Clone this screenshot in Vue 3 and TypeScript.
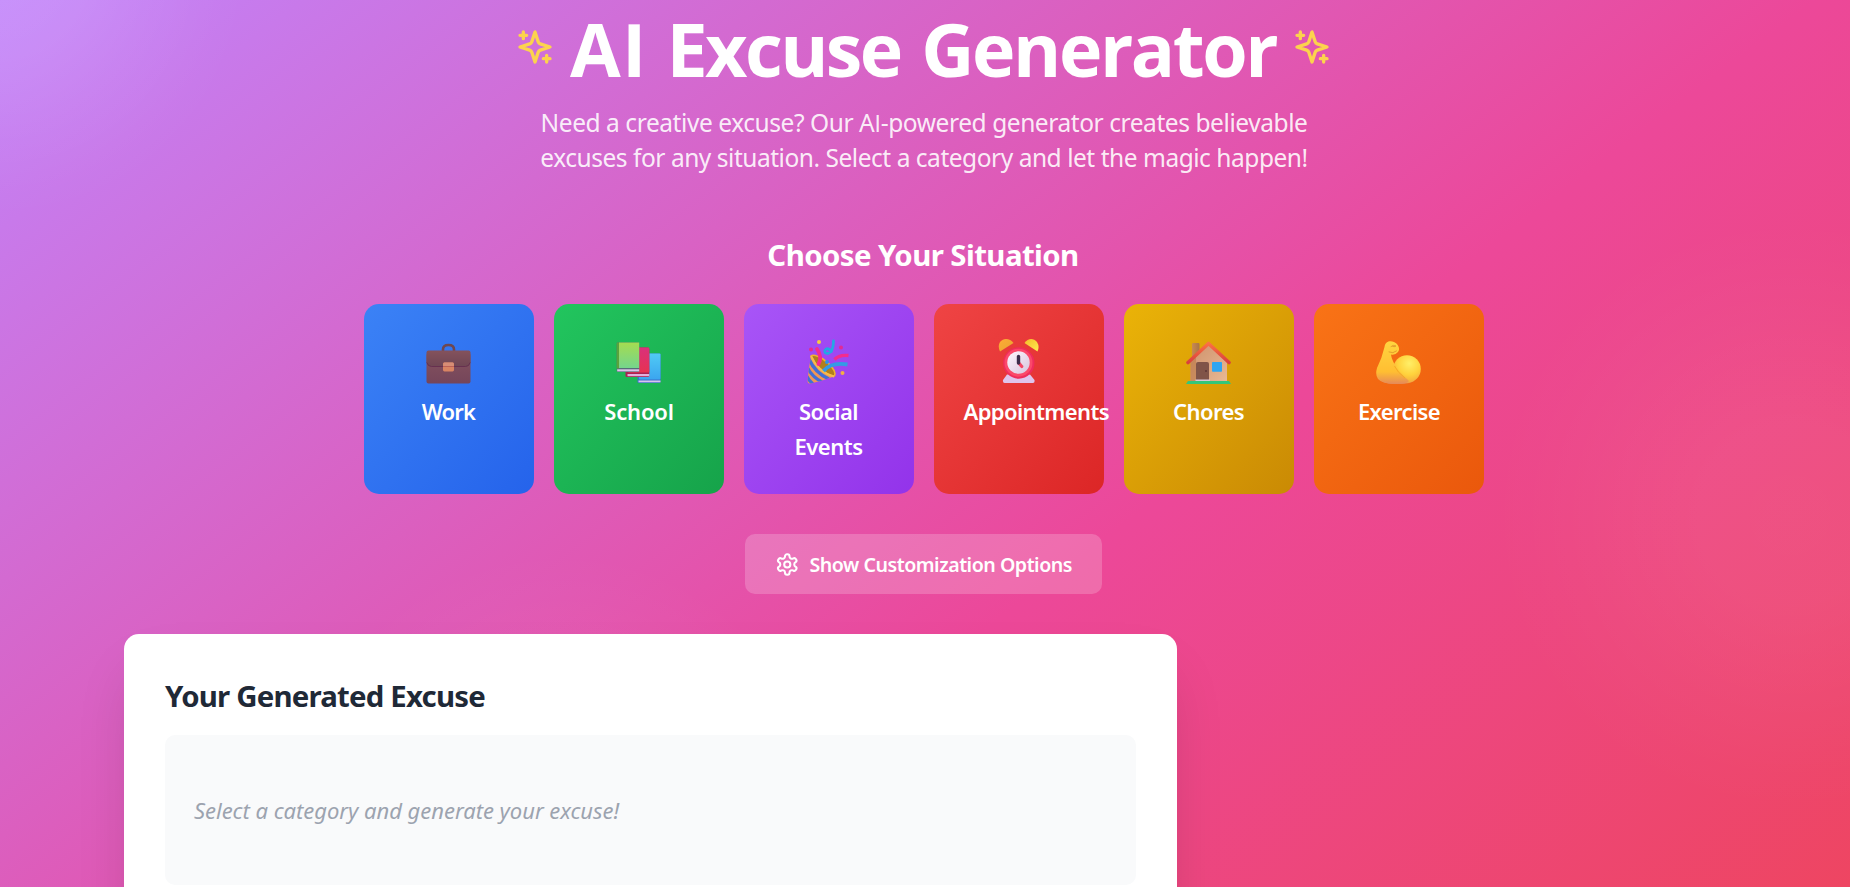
<script setup lang="ts">
interface Category {
  id: string
  label: string
}

const categories: Category[] = [
  { id: 'work', label: 'Work' },
  { id: 'school', label: 'School' },
  { id: 'social', label: 'Social Events' },
  { id: 'appointments', label: 'Appointments' },
  { id: 'chores', label: 'Chores' },
  { id: 'exercise', label: 'Exercise' },
]
</script>

<template>
  <div class="page">
    <header class="hero">
      <div class="title-row">
        <svg v-for="side in ['left', 'right']" :key="side" :class="['sparkles', side]" viewBox="0 0 24 24">
          <path d="m12 3-1.912 5.813a2 2 0 0 1-1.275 1.275L3 12l5.813 1.912a2 2 0 0 1 1.275 1.275L12 21l1.912-5.813a2 2 0 0 1 1.275-1.275L21 12l-5.813-1.912a2 2 0 0 1-1.275-1.275L12 3Z" />
          <path d="M5 3v4M19 17v4M3 5h4M17 19h4" />
        </svg>
        <h1><span class="w1">AI </span><span class="w2">Excuse </span><span class="w3">Generator</span></h1>
      </div>
      <p class="subtitle">
        <span class="line-a">Need a creative excuse? Our A<span class="plain">I</span>-powered generator creates believable</span><br />
        <span class="line-b">excuses for any situation. Select a category and let the magic happen!</span>
      </p>
    </header>

    <section class="situations">
      <h2>Choose Your Situation</h2>
      <div class="grid">
        <button v-for="c in categories" :key="c.id" :class="['card', c.id]">
          <svg v-if="c.id === 'work'" class="emoji" viewBox="0 0 45 45">
            <defs>
              <linearGradient id="wk1" x1="0" y1="0" x2="0" y2="1"><stop offset="0" stop-color="#84525c" /><stop offset="1" stop-color="#6f4654" /></linearGradient>
              <linearGradient id="wk2" x1="0" y1="0" x2="0" y2="1"><stop offset="0" stop-color="#85535f" /><stop offset="1" stop-color="#75455a" /></linearGradient>
            </defs>
            <path d="M17 13V10.500C17 7.500 19.500 6 22.500 6S28 7.500 28 10.500V13" fill="none" stroke="#6e4750" stroke-width="2.600" />
            <rect x="0.500" y="14" width="44" height="30.500" rx="2" fill="url(#wk2)" />
            <path d="M2.500 11.500H42.500Q44.500 11.500 44.500 13.500V23Q43.500 27.500 39.500 27.500H5.500Q1.500 27.500 0.500 23V13.500Q0.500 11.500 2.500 11.500Z" fill="url(#wk1)" />
            <path d="M0.800 23.500Q2 27.500 5.500 27.500H39.500Q43 27.500 44.200 23.500" fill="none" stroke="#67304f" stroke-width="1" />
            <rect x="17" y="23.500" width="11" height="9" rx="1.400" fill="#d98463" />
            <path d="M17.300 25Q17.300 23.500 18.500 23.500H26.500Q27.700 23.500 27.700 25V27H17.300Z" fill="#d78d76" />
            <path d="M17 27.500H28" stroke="#b95f55" stroke-width="0.900" />
          </svg>

          <svg v-else-if="c.id === 'school'" class="emoji" viewBox="0 0 45 45">
            <defs>
              <linearGradient id="sc1" x1="0" y1="0" x2="0" y2="1"><stop offset="0" stop-color="#a5dc50" /><stop offset="1" stop-color="#75d58c" /></linearGradient>
              <linearGradient id="sc2" x1="0" y1="0" x2="0" y2="1"><stop offset="0" stop-color="#d9317b" /><stop offset="1" stop-color="#e73252" /></linearGradient>
              <linearGradient id="sc3" x1="0" y1="0" x2="0" y2="1"><stop offset="0" stop-color="#50cbf5" /><stop offset="1" stop-color="#3ba5ef" /></linearGradient>
            </defs>
            <rect x="21.500" y="14.500" width="23" height="29.500" rx="1.200" fill="#3d6fc8" />
            <rect x="23" y="14.500" width="21.500" height="26" rx="1" fill="url(#sc3)" />
            <path d="M22.500 41.500H44.500V43.300H22.500Z" fill="#d9c4ee" />
            <rect x="9.500" y="8.500" width="23.800" height="29.500" rx="1.500" fill="#aa2353" />
            <rect x="12" y="8.500" width="21.300" height="25" rx="1" fill="url(#sc2)" />
            <path d="M11.500 35H33.300V37.200H11.500Z" fill="#dfb0dc" />
            <rect x="0.700" y="3.500" width="22.500" height="29.500" rx="1.200" fill="#566d78" />
            <rect x="0.700" y="3.500" width="3" height="26" rx="1" fill="#5aa33c" />
            <rect x="3" y="3.500" width="20.200" height="25.500" fill="url(#sc1)" />
            <path d="M1.200 30.300H23.200V32.400H1.200Z" fill="#dbc3e9" />
          </svg>

          <svg v-else-if="c.id === 'social'" class="emoji" viewBox="0 0 45 45">
            <defs>
              <clipPath id="soc"><path d="M5 17Q2.500 30 1.500 42Q1.500 45 4.500 44.500Q16 42 28 37.500Q15 34 5 17Z" /></clipPath>
            </defs>
            <path d="M5 17Q8 14.500 17 20Q28 28 29 34.500Q29 37 27.500 37.500Q12 33 5 17Z" fill="#b07f1c" stroke="#f0b32d" stroke-width="1.600" />
            <g clip-path="url(#soc)">
              <rect width="45" height="45" fill="#f09655" />
              <path d="M3 20Q9 34 23 40M1 28Q6 38 16 43M0 36Q3 42 8 46" fill="none" stroke="#426fd5" stroke-width="3.200" />
            </g>
            <path d="M5 17Q12 33 28 37.500" fill="none" stroke="#f3bd4c" stroke-width="2" />
            <path d="M11 10Q16.500 18 12.500 25" fill="none" stroke="#f32c8e" stroke-width="3.800" stroke-linecap="round" />
            <path d="M17.500 32Q25 23 41.500 25.500" fill="none" stroke="#339be5" stroke-width="3.800" />
            <path d="M28.500 20.500Q33 15.500 42.500 16.500" fill="none" stroke="#f32c8e" stroke-width="3.400" />
            <path d="M27.500 2Q27.500 13 22 14.500Q18 14.500 18.800 11.500Q21.500 7.500 25.500 12.500" fill="none" stroke="#24a6e5" stroke-width="2.800" stroke-linecap="round" />
            <circle cx="13" cy="3" r="2" fill="#f6cb3e" /><circle cx="5" cy="10.500" r="2" fill="#e42b91" />
            <circle cx="35" cy="8.500" r="2" fill="#e12a95" /><circle cx="21" cy="23" r="2" fill="#2d91e9" />
            <circle cx="36.500" cy="34" r="2" fill="#f4af43" />
          </svg>

          <svg v-else-if="c.id === 'appointments'" class="emoji" viewBox="0 0 45 45">
            <defs>
              <linearGradient id="ap1" x1="0" y1="0" x2="1" y2="1"><stop offset="0" stop-color="#ffa936" /><stop offset="1" stop-color="#e7a52f" /></linearGradient>
              <linearGradient id="ap2" x1="0" y1="0" x2="1" y2="1"><stop offset="0" stop-color="#f4bb29" /><stop offset="1" stop-color="#ffed50" /></linearGradient>
              <linearGradient id="ap3" x1="0" y1="0" x2="1" y2="1"><stop offset="0" stop-color="#fff8ff" /><stop offset="1" stop-color="#d7c2db" /></linearGradient>
            </defs>
            <path d="M4 12.500C0.500 5 5 -0.500 11 0Q15 0.500 17.500 4Z" fill="url(#ap1)" />
            <path d="M28.500 4C32 -1 37.500 -1 41 3Q43.800 7.500 41.500 12.500Z" fill="url(#ap2)" />
            <path d="M11 35.500H34L38.500 41Q39 44 37 44H8.500Q6.500 44 7 41Z" fill="#dfc4ec" />
            <circle cx="22.800" cy="24" r="15.700" fill="#ef2c5c" />
            <circle cx="22.500" cy="23.700" r="14" fill="#fb4869" />
            <circle cx="22.500" cy="23.500" r="11.200" fill="url(#ap3)" />
            <path d="M22.800 24L25.800 27.500" stroke="#f44664" stroke-width="3.200" stroke-linecap="round" />
            <path d="M22.500 17.500V24" stroke="#3d2d4b" stroke-width="3.400" stroke-linecap="round" />
          </svg>

          <svg v-else-if="c.id === 'chores'" class="emoji" viewBox="0 0 45 45">
            <defs>
              <linearGradient id="ch1" x1="0" y1="0" x2="1" y2="1"><stop offset="0" stop-color="#ce916a" /><stop offset="1" stop-color="#e8b894" /></linearGradient>
              <linearGradient id="ch2" x1="0" y1="0" x2="1" y2="0"><stop offset="0" stop-color="#c98a51" /><stop offset="1" stop-color="#a97445" /></linearGradient>
              <linearGradient id="ch3" x1="0" y1="0" x2="0" y2="1"><stop offset="0" stop-color="#fb7043" /><stop offset="1" stop-color="#d9403c" /></linearGradient>
            </defs>
            <rect x="6" y="4" width="7.500" height="18" rx="1" fill="url(#ch2)" />
            <path d="M4.500 21L22.500 5L41 21V42.500H4.500Z" fill="url(#ch1)" />
            <path d="M4.500 21L10 16V42.500H4.500Z" fill="#bd7a48" opacity="0.600" />
            <path d="M2 23.500L22.500 4.500L43 23.500" fill="none" stroke="url(#ch3)" stroke-width="3.600" stroke-linecap="round" stroke-linejoin="round" />
            <path d="M10 42V25Q10 23 12 23H21Q23 23 23 25V42Z" fill="#805448" />
            <rect x="9.500" y="40.500" width="14.500" height="2" fill="#d8c7d6" />
            <circle cx="20" cy="32" r="0.900" fill="#5a3434" />
            <rect x="26" y="23" width="10" height="9.800" rx="0.800" fill="#2da5f2" />
            <path d="M2 42H43L45 45H0Z" fill="#34c679" />
          </svg>

          <svg v-else class="emoji" viewBox="0 0 45 45">
            <defs>
              <radialGradient id="ex1" cx="0.580" cy="0.300" r="0.750"><stop offset="0" stop-color="#ffef68" /><stop offset="0.550" stop-color="#ffd23c" /><stop offset="1" stop-color="#f2a23e" /></radialGradient>
              <linearGradient id="ex2" gradientUnits="userSpaceOnUse" x1="0" y1="2" x2="0" y2="46"><stop offset="0" stop-color="#ffd540" /><stop offset="0.700" stop-color="#ffbe32" /><stop offset="1" stop-color="#e4855c" /></linearGradient>
            </defs>
            <path d="M8.500 8C9.500 2 14 1.500 18 3C22.500 5 24.500 10 22 13Q19 16.500 15 15.500Q15.500 20 19 26L27 24L38 42Q34 45 22 45Q7 45.500 2 40Q-1 36 1 29Q6 19 8.500 8Z" fill="url(#ex2)" />
            <circle cx="31" cy="30" r="13.800" fill="url(#ex1)" />
            <path d="M9 36Q14 29 18.500 26Q22 32 33 42Q31 45 22 45Q9 45.500 4 41Z" fill="url(#ex2)" />
            <path d="M18.500 27Q21 33 29 39" fill="none" stroke="#f5aa25" stroke-width="1" />
            <path d="M13 13Q17 15 20.500 12M15 7.500Q17.500 5.500 20 7Q18 8.500 16.500 7.300" fill="none" stroke="#e09a2a" stroke-width="0.900" stroke-linecap="round" />
          </svg>
          <span class="label">{{ c.label }}</span>
        </button>
      </div>
    </section>

    <button class="customize">
      <svg viewBox="0 0 24 24">
        <path d="M12.220 2h-.44a2 2 0 0 0-2 2v.18a2 2 0 0 1-1 1.730l-.43.25a2 2 0 0 1-2 0l-.15-.08a2 2 0 0 0-2.730.73l-.22.38a2 2 0 0 0 .73 2.730l.15.1a2 2 0 0 1 1 1.720v.51a2 2 0 0 1-1 1.740l-.15.09a2 2 0 0 0-.73 2.730l.22.38a2 2 0 0 0 2.730.73l.15-.08a2 2 0 0 1 2 0l.43.25a2 2 0 0 1 1 1.730V20a2 2 0 0 0 2 2h.44a2 2 0 0 0 2-2v-.18a2 2 0 0 1 1-1.730l.43-.25a2 2 0 0 1 2 0l.15.08a2 2 0 0 0 2.730-.73l.22-.39a2 2 0 0 0-.73-2.730l-.15-.08a2 2 0 0 1-1-1.740v-.5a2 2 0 0 1 1-1.740l.15-.09a2 2 0 0 0 .73-2.730l-.22-.38a2 2 0 0 0-2.730-.73l-.15.08a2 2 0 0 1-2 0l-.43-.25a2 2 0 0 1-1-1.730V4a2 2 0 0 0-2-2z" />
        <circle cx="12" cy="12" r="3" />
      </svg>
      <span>Show Customization Options</span>
    </button>

    <main class="columns">
      <section class="panel">
        <h3>Your Generated Excuse</h3>
        <div class="excuse"><p>Select a category and generate your excuse!</p></div>
      </section>
    </main>
  </div>
</template>

<style>
html,
body {
  margin: 0;
  overflow: hidden;
}
</style>

<style scoped>
.page {
  box-sizing: border-box;
  width: 100%;
  height: 887px;
  padding: 10px 2px 0 0;
  overflow: hidden;
  display: flex;
  flex-direction: column;
  align-items: center;
  font-family: "Noto Sans", "Open Sans", sans-serif;
  color: #fff;
  background:
    radial-gradient(circle 250px at 0 -30px, rgba(255, 255, 255, 0.13), rgba(255, 255, 255, 0.1) 35%, rgba(255, 255, 255, 0.05) 62%, rgba(255, 255, 255, 0.01) 86%, transparent),
    radial-gradient(circle 300px at 1790px 515px, rgba(255, 255, 255, 0.06), rgba(255, 255, 255, 0.053) 30%, rgba(255, 255, 255, 0.026) 62%, rgba(255, 255, 255, 0.006) 86%, transparent),
    radial-gradient(circle 270px at 560px 820px, rgba(255, 255, 255, 0.06), rgba(255, 255, 255, 0.045) 45%, rgba(255, 255, 255, 0.02) 75%, transparent),
    linear-gradient(to bottom right, #c084fc, #ec4899, #ef4444) 0 -25px / 100% 1400px no-repeat;
}
.page > * {
  flex: none;
}
h1,
h2,
h3,
p {
  margin: 0;
}
button {
  font: inherit;
  color: inherit;
  border: 0;
}
.title-row {
  height: 75px;
  margin-left: -1px;
  display: flex;
  align-items: flex-start;
  justify-content: center;
  gap: 14px;
}
.sparkles {
  flex: none;
  width: 40px;
  height: 40px;
  margin-top: 17px;
  fill: none;
  stroke: #fcd34d;
  stroke-width: 2;
  stroke-linecap: round;
  stroke-linejoin: round;
}
.sparkles.right {
  order: 2;
}
h1 {
  box-sizing: border-box;
  display: flex;
  width: 709px;
  margin-top: 1px;
  padding-left: 1px;
  font-family: "Open Sans", sans-serif;
  font-size: 73.500px;
  line-height: 75px;
  font-weight: 700;
  white-space: nowrap;
}
.w1 {
  width: 96.500px;
  letter-spacing: 1.200px;
}
.w2 {
  width: 254.800px;
  letter-spacing: -2.600px;
}
.w3 {
  letter-spacing: -2.450px;
}
.subtitle {
  margin-top: 20px;
  font-size: 24.500px;
  line-height: 35px;
  text-align: center;
  color: rgba(255, 255, 255, 0.9);
  white-space: nowrap;
}
.line-a {
  letter-spacing: -0.430px;
}
.line-b {
  letter-spacing: -0.465px;
}
.plain {
  font-family: "Open Sans", sans-serif;
}
.situations {
  margin-top: 60px;
}
h2 {
  font-size: 29.400px;
  line-height: 40px;
  letter-spacing: -0.570px;
  text-align: center;
  margin: 0 2px 29px 0;
}
.grid {
  display: grid;
  grid-template-columns: repeat(6, 170px);
  gap: 20px;
}
.card {
  display: flex;
  flex-direction: column;
  align-items: center;
  height: 190px;
  padding: 35px 31px 0 29px;
  border-radius: 15px;
}
.work { background: linear-gradient(to bottom right, #3b82f6, #2563eb); }
.school { background: linear-gradient(to bottom right, #22c55e, #16a34a); }
.social { background: linear-gradient(to bottom right, #a855f7, #9333ea); }
.appointments { background: linear-gradient(to bottom right, #ef4444, #dc2626); }
.chores { background: linear-gradient(to bottom right, #eab308, #ca8a04); }
.exercise { background: linear-gradient(to bottom right, #f97316, #ea580c); }
.emoji {
  flex: none;
  width: 45px;
  height: 45px;
}
.label {
  width: 110px;
  margin: 10px -1px 0 0;
  font-size: 22px;
  line-height: 35px;
  font-weight: 600;
  letter-spacing: -0.610px;
}
.work .label { letter-spacing: -0.780px; }
.school .label { letter-spacing: -0.170px; margin-right: -2px; }
.social .label { letter-spacing: -0.500px; }
.exercise .label { margin-right: -2px; }
.customize {
  display: flex;
  align-items: center;
  box-sizing: border-box;
  width: 357px;
  height: 60px;
  margin: 40px 1px 0 0;
  padding: 0 30px;
  border-radius: 10px;
  background: rgba(255, 255, 255, 0.2);
  font-size: 19.600px;
  line-height: 30px;
  font-weight: 600;
  letter-spacing: -0.480px;
  white-space: nowrap;
}
.customize span {
  padding-top: 2px;
}
.customize svg {
  width: 25px;
  height: 25px;
  margin-right: 10px;
  fill: none;
  stroke: currentColor;
  stroke-width: 2;
  stroke-linecap: round;
  stroke-linejoin: round;
}
.columns {
  width: 1600px;
  margin-top: 40px;
  display: grid;
  grid-template-columns: repeat(3, 1fr);
  gap: 40px;
}
.panel {
  grid-column: span 2;
  box-sizing: border-box;
  height: 460px;
  padding: 42px 41px 40px;
  border-radius: 15px;
  background: #fff;
  box-shadow: 0 31px 56px -16px rgba(0, 0, 0, 0.18);
}
h3 {
  font-size: 29.400px;
  line-height: 40px;
  letter-spacing: -0.800px;
  color: #1f2937;
}
.excuse {
  display: flex;
  align-items: center;
  box-sizing: border-box;
  height: 150px;
  margin-top: 19px;
  padding: 0 29px;
  border-radius: 10px;
  background: #f9fafb;
}
.excuse p {
  font-size: 22px;
  line-height: 35px;
  font-style: italic;
  letter-spacing: -0.030px;
  color: #9ca3af;
}
</style>
